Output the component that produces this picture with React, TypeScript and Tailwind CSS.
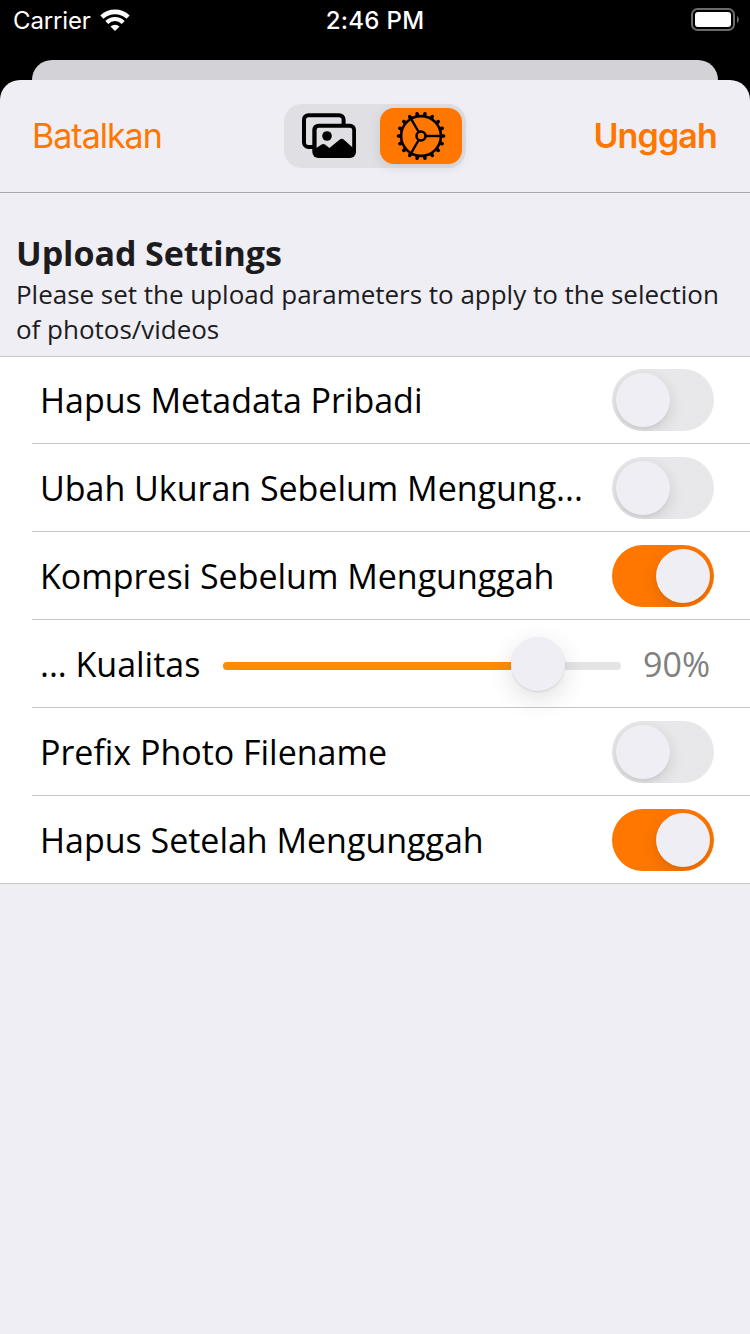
import React from "react";

const WifiIcon = () => (
  <svg width="30" height="22" viewBox="0 0 30 22" fill="none" stroke="#fff" strokeWidth="4.6">
    <path d="M1.9 8.2A18.8 18.8 0 0 1 28.1 8.2" />
    <path d="M6.8 13.4A11.6 11.6 0 0 1 23.2 13.4" strokeWidth="4.2" />
    <path d="M15 22 10.5 17.5A6.4 6.4 0 0 1 19.5 17.5Z" fill="#fff" stroke="none" />
  </svg>
);

const BatteryIcon = () => (
  <svg width="50" height="24" viewBox="0 0 50 24">
    <rect x="2" y="1" width="42" height="21" rx="5.5" fill="none" stroke="#6b6b6b" strokeWidth="2" />
    <rect x="5" y="4" width="36" height="15" rx="3" fill="#fff" />
    <path d="M47 8C49.4 9 49.4 14 47 15Z" fill="#6b6b6b" />
  </svg>
);

const PhotosIcon = () => (
  <svg width="58" height="48" viewBox="0 0 58 48">
    <rect x="4" y="3.2" width="39.6" height="31.8" rx="4.5" fill="none" stroke="#000" strokeWidth="4" />
    <rect x="12.3" y="11.7" width="43.7" height="34.4" rx="6" fill="#000" />
    <rect x="16.6" y="15.7" width="35.6" height="25" rx="2.2" fill="#dfdfe3" />
    <circle cx="27" cy="24" r="4.8" />
    <path d="M14 37.6 21.6 32.6Q23.3 31.4 25 32.6L29.4 36 39.2 27.9Q41.7 25.8 44.2 27.9L54 36.8V42Q54 45 51 45H18Q14 45 14 42Z" />
  </svg>
);

const teeth = Array.from({ length: 18 }, (_, i) => i * 20);

const GearIcon = () => (
  <svg width="50" height="50" viewBox="-25 -25 50 50" fill="none" stroke="#000" strokeWidth="2.6">
    <circle r="19.9" strokeWidth="2.6" />
    <circle r="4.5" />
    {[0, 120, 240].map((a) => (
      <path key={a} d="M4.6 0H20" strokeWidth="2.4" transform={`rotate(${a})`} />
    ))}
    {teeth.map((a) => (
      <path key={a} d="M20.5-2.1 23.5-1.5Q24.3-1.2 24.3 0 24.3 1.2 23.5 1.5L20.5 2.1Z" fill="#000" stroke="none" transform={`rotate(${a})`} />
    ))}
  </svg>
);

const Switch = ({ on }: { on: boolean }) => (
  <div
    className={
      "flex h-[62px] w-[102px] shrink-0 overflow-hidden rounded-full p-1 " +
      (on ? "justify-end bg-[#ff7700]" : "justify-start bg-[#e8e8ea]")
    }
  >
    <div className="size-[54px] rounded-full bg-[#efeef4] shadow-[0_5px_16px_rgba(0,0,0,0.12),0_3px_3px_rgba(0,0,0,0.03)]" />
  </div>
);

const Row = ({ label, last, children }: { label: React.ReactNode; last?: boolean; children: React.ReactNode }) => (
  <div className={last ? "" : "pl-8"}>
    <div
      className={
        "flex h-[88px] items-center border-b border-[#c6c6c8] pr-9 " + (last ? "pl-10" : "pl-2")
      }
    >
      <div className="whitespace-nowrap pt-px text-[34px] leading-[46px] tracking-[-0.02px] text-black">{label}</div>
      {children}
    </div>
  </div>
);

export default function App() {
  return (
    <div className="flex h-[1334px] w-[750px] flex-col overflow-hidden bg-black font-['Open_Sans','Noto_Sans',sans-serif]">
      <div className="grid h-[60px] shrink-0 grid-cols-3 items-start font-['Inter',sans-serif] text-white">
        <div className="flex items-start gap-[9px] pl-[13px]">
          <span className="w-[78px] whitespace-nowrap pt-[6px] text-[24px] leading-[30px] tracking-[-0.15px]">Carrier</span>
          <span className="pt-[9px]"><WifiIcon /></span>
        </div>
        <div className="pt-[6px] text-center text-[24px] font-medium leading-[30px] tracking-[0.3px]">2:46 PM</div>
        <div className="flex justify-end pr-[10px] pt-2"><BatteryIcon /></div>
      </div>

      <div className="mx-8 h-5 shrink-0 rounded-t-[20px] bg-[#d3d2d7]" />

      <div className="flex flex-1 flex-col rounded-t-[20px] bg-[#efeef4]">
        <div className="flex h-[113px] items-center justify-between border-b border-[#a9a8ad] px-8 font-['Inter',sans-serif] text-[34px] leading-[42px] text-[#ff7700]">
          <div className="w-[220px] tracking-[-1px]">Batalkan</div>
          <div className="flex h-16 w-[182px] items-center justify-between rounded-[18px] bg-[#e0dfe4] p-1">
            <div className="flex h-14 w-[82px] items-center justify-center"><PhotosIcon /></div>
            <div className="flex h-14 w-[82px] items-center justify-center rounded-[14px] bg-[#ff7700] shadow-[0_3px_12px_rgba(0,0,0,0.1)]"><GearIcon /></div>
          </div>
          <div className="w-[220px] pr-px text-right font-semibold tracking-[-0.85px]">Unggah</div>
        </div>

        <div className="h-[163px] px-4 pt-[37px] text-[#1c1c1e]">
          <h1 className="text-[34px] font-bold leading-[46px] tracking-[-0.06px]">Upload Settings</h1>
          <p className="whitespace-nowrap pt-px text-[26px] leading-[35px] tracking-[-0.02px]">
            Please set the upload parameters to apply to the selection<br />of photos/videos
          </p>
        </div>

        <div className="bg-white shadow-[inset_0_1px_0_#c6c6c8]">
          <Row label="Hapus Metadata Pribadi"><div className="ml-auto"><Switch on={false} /></div></Row>
          <Row label="Ubah Ukuran Sebelum Mengung..."><div className="ml-auto"><Switch on={false} /></div></Row>
          <Row label="Kompresi Sebelum Mengunggah"><div className="ml-auto"><Switch on /></div></Row>
          <Row label="... Kualitas">
            <div className="ml-auto flex h-[54px] w-[398px] items-center">
              <div className="mt-1 h-2 w-[288px] rounded-l-full bg-[#ff8c00]" />
              <div className="z-10 size-[54px] shrink-0 rounded-full bg-[#efeef4] shadow-[0_1px_2px_rgba(0,0,0,0.1),0_8px_26px_rgba(0,0,0,0.13)]" />
              <div className="mt-1 h-2 w-14 rounded-r-full bg-[#e4e4e5]" />
            </div>
            <div className="ml-[22px] w-[71px] shrink-0 pt-px text-[34px] leading-[46px] text-[#808080]">90%</div>
          </Row>
          <Row label="Prefix Photo Filename"><div className="ml-auto"><Switch on={false} /></div></Row>
          <Row label="Hapus Setelah Mengunggah" last><div className="ml-auto"><Switch on /></div></Row>
        </div>
      </div>
    </div>
  );
}
